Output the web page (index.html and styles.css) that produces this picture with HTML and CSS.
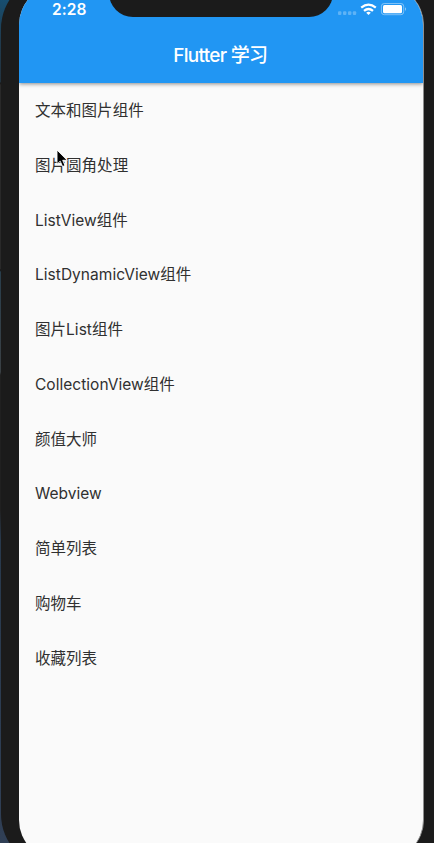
FILE: index.html
```html
<!DOCTYPE html>
<html lang="zh-CN">
<head>
<meta charset="utf-8">
<title>Flutter 学习</title>
<link rel="stylesheet" href="styles.css">
</head>
<body>
<div class="device">
  <main class="screen">
    <header class="app-bar">
      <div class="status">
        <span class="time">2:28</span>
        <svg class="signals" width="70" height="18" viewBox="0 0 70 18">
          <g fill="#fff" fill-opacity=".28"><rect x="1" y="11.3" width="3.4" height="3.6" rx="1"/><rect x="6" y="11.3" width="3.4" height="3.6" rx="1"/><rect x="11" y="11.3" width="3.4" height="3.6" rx="1"/><rect x="15.8" y="11.3" width="3.4" height="3.6" rx="1"/></g>
          <g fill="none" stroke="#fff" stroke-width="2.2"><path d="M24.2 7.7Q31.5 1.4 38.8 7.7"/><path d="M27 10.9Q31.5 7.1 36 10.9"/></g>
          <path d="M29.2 12.7Q31.5 11 33.8 12.7L31.5 15.1Z" fill="#fff"/>
          <rect x="44.4" y="3.5" width="22.3" height="11.2" rx="2.8" fill="none" stroke="#fff" stroke-opacity=".42"/>
          <rect x="46" y="5" width="19" height="8.2" rx="1.5" fill="#fff"/>
          <path d="M68 7.3Q70 9 68 10.9Z" fill="#fff" fill-opacity=".5"/>
        </svg>
      </div>
      <h1 class="title">Flutter 学习</h1>
    </header>
    <ul class="list">
      <li>文本和图片组件</li>
      <li>图片圆角处理</li>
      <li>ListView组件</li>
      <li>ListDynamicView组件</li>
      <li>图片List组件</li>
      <li>CollectionView组件</li>
      <li>颜值大师</li>
      <li>Webview</li>
      <li>简单列表</li>
      <li>购物车</li>
      <li>收藏列表</li>
    </ul>
  </main>
  <div class="notch"></div>
  <svg class="cursor" width="13" height="20" viewBox="0 0 13 20"><path d="M1 1V15.2L4.2 12.2L6.6 17.6L9 16.5L6.7 11.3H11.2Z" fill="#000" stroke="#fff" stroke-width=".9"/></svg>
</div>
</body>
</html>
```
FILE: styles.css
```css
* { box-sizing: border-box; }
body {
  margin: 0;
  height: 843px;
  overflow: hidden;
  background: linear-gradient(#174e70 0, #203b4e 40px, #22323e 82px, #161616 83px, #292929 85px, #292929 269px, #111 270px, #293e4c 272px, #3a4044 372px, #202020 375px, #202020 510px, #28394c 540px, #303f55 843px);
  font-family: Inter, "Noto Sans CJK SC", sans-serif;
}
.device {
  position: relative;
  width: 433px;
  height: 893px;
  margin: -25px 0 0 1px;
  padding: 10px 0 0 18px;
  border-radius: 54px 0 0 54px;
  background: #1b1b1b;
}
.screen {
  width: 404.5px;
  height: 875px;
  border-radius: 40px;
  overflow: hidden;
  background: #fafafa;
  border-right: 1px solid #8f8f8f;
}
.app-bar {
  position: relative;
  height: 98px;
  padding-top: 15px;
  background: #2196f3;
  color: #fff;
  box-shadow: 0 1px 4px rgba(0, 0, 0, .45);
}
.status {
  display: flex;
  justify-content: space-between;
  height: 28px;
  padding: 0 15.5px 0 33px;
}
.time {
  font-size: 15.5px;
  line-height: 19px;
  font-weight: 600;
  letter-spacing: .1px;
}
.title {
  margin: 0;
  padding-right: 1px;
  text-align: center;
  font-size: 19px;
  line-height: 56px;
  font-weight: 500;
  letter-spacing: -.7px;
}
.list {
  list-style: none;
  margin: 0;
  padding: 1px 16px 0;
}
.list li {
  height: 54.75px;
  line-height: 54.75px;
  font-size: 15.5px;
  letter-spacing: .03px;
  color: #303030;
  white-space: nowrap;
}
.notch {
  position: absolute;
  left: 108px;
  top: 0;
  width: 224px;
  height: 42px;
  border-radius: 0 0 24px 24px;
  background: #1b1b1b;
}
.cursor {
  position: absolute;
  left: 55px;
  top: 174px;
}
```
